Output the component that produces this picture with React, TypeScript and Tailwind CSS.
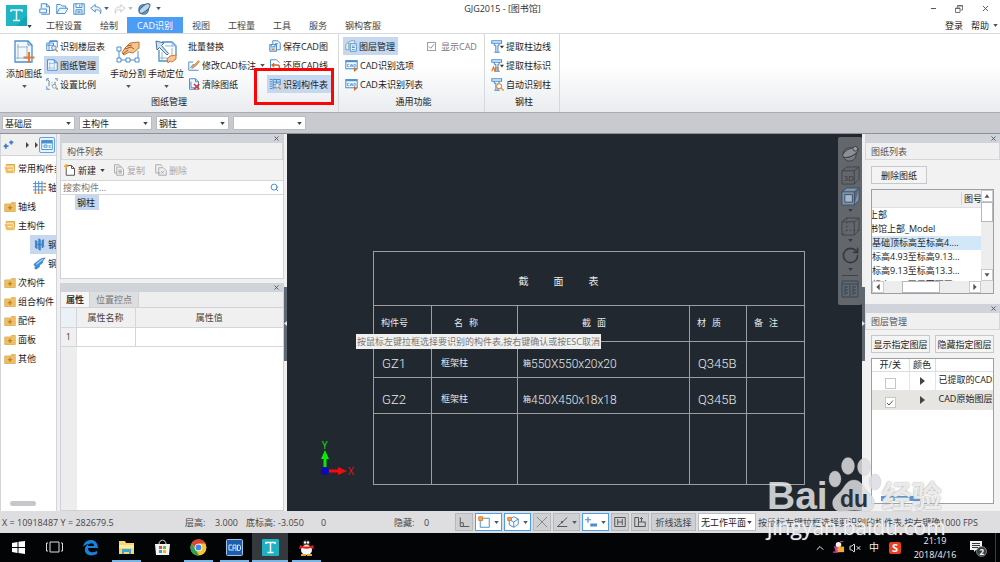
import type { ReactNode } from "react";
import { Search, X, Minus, ChevronUp, VolumeX, RotateCw } from "lucide-react";

type IconProps = { className?: string };

// Base wrapper for all the small 16x16 line icons
function Icon({ className = "size-3", children }: { className?: string; children: ReactNode }) {
  return (
    <svg viewBox="0 0 16 16" fill="none" stroke="#4a8fd0" strokeWidth="1.3" className={`shrink-0 ${className}`}>
      {children}
    </svg>
  );
}

function Caret({ className = "text-gray-600" }: IconProps) {
  return (
    <svg viewBox="0 0 6 4" className={`w-[5px] h-[3px] shrink-0 ${className}`}>
      <path d="M0 0h6L3 4z" fill="currentColor" />
    </svg>
  );
}

/* ---------- ribbon icons ---------- */
const FloorTableIcon = () => (
  <Icon>
    <path d="M5 1h10v9M5 1v3M1 4h9v10H1zM1 7h9M4 4v10M5 2h10" />
    <circle cx="10.5" cy="10.5" r="3" fill="#dcebf8" />
    <path d="M12.5 12.5l3 3" stroke="#e08030" strokeWidth="2" />
  </Icon>
);
const SheetIcon = () => (
  <Icon>
    <path d="M2 1h9l4 4v10H2zM11 1v4h4" fill="#eef6fd" />
    <path d="M5 4v9M2 12h10M4 6h7M11 6v7" stroke="#8ab6dd" strokeWidth="1" />
  </Icon>
);
const ScaleIcon = () => (
  <Icon>
    <path d="M1 4V1h3M12 1h3v3M1 11v4h4M2 2l3 3" />
    <path d="M4 5v6M12 5v5M8 6v1M8 9v1" stroke="#777" />
    <circle cx="11" cy="11" r="2.5" fill="#fff" stroke="#6aa7dc" />
    <path d="M13 13l3 2.5" stroke="#e08030" strokeWidth="2" />
  </Icon>
);
const EditDimIcon = () => (
  <Icon>
    <path d="M1 4v11h13M1 4h6M3 12l4-5 2 3 4-4" />
    <path d="M6 10l8-8 1.5 1.5-8 8-2.5 1z" fill="#f0a860" stroke="#c96a20" strokeWidth=".8" />
  </Icon>
);
const ClearIcon = () => (
  <Icon>
    <path d="M2 1h8l4 4v10H2zM10 1v4h4M4 5v8h5" fill="#eef6fd" />
    <path d="M8 8l7 7M15 8l-7 7" stroke="#dd2c2c" strokeWidth="2" />
  </Icon>
);
const SaveCadIcon = () => (
  <Icon>
    <path d="M5 5V1h7l3 3v9h-4" fill="#eef6fd" />
    <path d="M1 6h9v9H1zM3 6v3h5V6" fill="#cde3f7" />
    <path d="M8 5h4" />
    <path d="M3.5 12.5h4" stroke="#e08030" strokeWidth="2" />
  </Icon>
);
const RestoreIcon = () => (
  <Icon>
    <path d="M2 15V1h8l4 4" fill="none" />
    <path d="M6 8h5a3 3 0 010 6H8" stroke="#d8642c" strokeWidth="2" />
    <path d="M7 4.5L2.5 8 7 11.5z" fill="#d8642c" stroke="none" />
  </Icon>
);
const PartTableIcon = () => (
  <Icon>
    <path d="M1 2h3M1 5h3M1 8h3M1 11h3M1 14h3M5.5 1v14M5 2h10v7H5M5 5.5h10M10 2v12M5 13h5" />
    <circle cx="11" cy="10" r="2.5" fill="#fff3e2" stroke="#9ab" />
    <path d="M12.5 12l3 3" stroke="#e08a30" strokeWidth="2" />
  </Icon>
);
const LayerMgrIcon = () => (
  <Icon>
    <path d="M5 3l3-2h5v4M1 6l4-3v10H1z" stroke="#8aa" fill="#e6eef5" />
    <path d="M7 5h8v10H7zM9 8h4M9 10h4M9 12.5h4" fill="#fff" />
  </Icon>
);
const CadIcon = () => (
  <Icon className="size-[13px]">
    <rect x="1" y="2" width="14" height="10" fill="#fff" />
    <path d="M1 3h14" strokeWidth="2" />
    <path d="M3 6.5h2.5M3 6.5v3M3 9.5h2.5M7 10V7h2v3M7 8.5h2M11 6.5v3.5h1.5l.8-1v-1.5l-.8-1z" strokeWidth="1" />
    <path d="M11 10v6l4-3z" fill="#e0662a" stroke="none" />
  </Icon>
);
function ColumnIcon({ mark }: { mark: "edge" | "label" | "auto" }) {
  return (
    <Icon className="size-[13px]">
      <path d="M1 1h12v3H1zM4 4v2l2 1v8M10 4v2L8.5 7v8M4 15h7" fill="#e4f1fc" />
      {mark !== "auto" && <path d="M11 7h5l-2.5 3.5z" fill="#333" stroke="none" />}
      {mark === "label" && <path d="M1 15l2-5 2 5M5.5 15v-4h3v4" stroke="#e07a30" strokeWidth="1.5" />}
      {mark === "auto" && (
        <>
          <circle cx="10" cy="10" r="3" fill="#fff" stroke="#e08a40" />
          <path d="M12 12l3.5 3.5" stroke="#e08a40" strokeWidth="1.6" />
        </>
      )}
    </Icon>
  );
}

const AddSheetIcon = () => (
  <svg viewBox="0 0 22 24" fill="none" stroke="#4a8fd0" className="w-[22px] h-6">
    <path d="M2 1h13l4 4v17H2z" fill="#f2f8fd" strokeWidth="1.3" />
    <path d="M15 1v4h4" />
    <path d="M5 4v15M3 18h12M4 7h11M14 6v13" stroke="#9db4c8" />
    <path d="M16 12v11M10.5 17.5h11" stroke="#e07a35" strokeWidth="2" />
  </svg>
);
const SplitIcon = () => (
  <svg viewBox="0 0 24 24" fill="none" className="size-6">
    <path d="M3 9v11h19v-9" stroke="#4a8fd0" />
    <path d="M1 7h4v4H1zM1 18h4v4H1zM10 18h4v4h-4zM19 18h4v4h-4z" fill="#fff" stroke="#4a8fd0" />
    <path d="M6 13l3-5 5-5 9-1v6l-6 5-4-1-5 3z" fill="#f3c594" stroke="#c9722c" />
    <path d="M9 9l6-2 3 2M11 6l5-1M7 14l5-4" stroke="#a9581b" />
  </svg>
);
const LocateIcon = () => (
  <svg viewBox="0 0 24 24" fill="none" className="size-6">
    <path d="M8 2h10l4 4v10M5 10v11h9" stroke="#4a8fd0" strokeWidth="1.3" />
    <path d="M18 2v4h4M8 12v9M18 8v8M6 18h8M11 6h8" stroke="#8ab6dd" />
    <path d="M2 1l8 2-2.5 2.5 7 8-1.5 1.5-7.5-7.5L3 10z" fill="#cfe2f4" stroke="#4d6f96" />
    <path d="M13 19l3-3 6-1v4l-4 3-2-1-2 2z" fill="#f7c48e" stroke="#d8763c" />
  </svg>
);

/* ---------- building blocks ---------- */
function RibbonButton({ icon, label, active, caret }: { icon?: ReactNode; label: string; active?: boolean; caret?: boolean }) {
  return (
    <button className={`h-[18px] flex items-center gap-[2px] pl-[2px] pr-[3px] whitespace-nowrap ${active ? "bg-[#c5d8f0]" : ""}`}>
      {icon}
      <span>{label}</span>
      {caret && <Caret className="ml-[2px] text-gray-600" />}
    </button>
  );
}

function BigButton({ icon, label }: { icon: ReactNode; label: string }) {
  return (
    <button className="w-[38px] h-14 pt-[3px] flex flex-col items-center whitespace-nowrap">
      {icon}
      <span className="mt-[3px]">{label}</span>
      <Caret className="mt-[5px] text-gray-600" />
    </button>
  );
}

function RibbonGroup({ title, className, children }: { title: string; className: string; children: ReactNode }) {
  return (
    <section className={`flex flex-col shrink-0 border-r border-[#d5d8dc] ${className}`}>
      <div className="flex pt-[3px] h-[61px]">{children}</div>
      <div className="text-center leading-[14px]">{title}</div>
    </section>
  );
}

function Combo({ label, value, className = "" }: { label: string; value: string; className?: string }) {
  return (
    <div className={`relative flex items-center ${className}`}>
      <select
        aria-label={label}
        defaultValue={value}
        className="appearance-none w-full h-full bg-white border border-[#b9bcc2] pl-[2px] pr-2 text-[9px] text-[#222]"
      >
        <option>{value}</option>
      </select>
      <Caret className="absolute right-1 text-gray-700 pointer-events-none" />
    </div>
  );
}

function PanelHead({ title }: { title?: string }) {
  return (
    <>
      <div className="h-[9px] shrink-0 bg-[#d0d3da] flex items-center justify-end pr-[3px]">
        <button aria-label="关闭" className="text-gray-600">
          <X size={7} strokeWidth={3} />
        </button>
      </div>
      {title && (
        <div className="h-[17px] shrink-0 flex items-center px-[5px] bg-[#f0f0f1] border border-t-0 border-[#d4d6da] text-[#555]">
          {title}
        </div>
      )}
    </>
  );
}

/* ---------- header ---------- */
const tabs = ["工程设置", "绘制", "CAD识别", "视图", "工程量", "工具", "服务", "钢构客服"];

function Logo({ className = "size-[21px]" }: IconProps) {
  return (
    <svg viewBox="0 0 21 21" className={className}>
      <rect width="21" height="21" fill="#12a5b8" />
      <path d="M0 0h21v10L10 21H0z" fill="#20b4c4" />
      <path d="M5 7V5h11v2M10.5 5v10M7 15.5h7" stroke="#e4f8fa" strokeWidth="1.5" fill="none" />
    </svg>
  );
}

function Header() {
  return (
    <header className="flex shrink-0 h-[33px] bg-white">
      <div className="w-[37px] pl-[6px] pt-[5px] flex shrink-0 items-start">
        <Logo />
        <Caret className="mt-[20px] text-gray-700" />
      </div>
      <div className="flex-1 flex flex-col min-w-0">
        <div className="h-[17px] flex items-center">
          <div className="w-[126px] pl-[2px] flex items-center gap-[5px] shrink-0">
            <button aria-label="新建">
              <Icon><path d="M3 7V1h7l4 4v10H3M10 1v4h4M1 8h9v5H1z" fill="#eef6fd" /></Icon>
            </button>
            <button aria-label="打开">
              <Icon><path d="M1 14V2h5l2 2h5v3M1 14l4-7h11l-4 7z" fill="#eef6fd" /></Icon>
            </button>
            <button aria-label="保存">
              <Icon><path d="M1 1h14v14H1zM4 1v5h8V1M4 15v-6h8v6M9 2v3M6 11h4M6 13h4" fill="#eef6fd" /></Icon>
            </button>
            <button aria-label="撤销" className="flex items-center gap-[2px]">
              <Icon><path d="M7 2L1 7l6 5V9c5 0 7 1 7 5 2-6-1-9-7-9z" fill="#eef6fd" /></Icon>
              <Caret />
            </button>
            <button aria-label="重做" className="flex items-center gap-[2px] opacity-40">
              <Icon><path d="M9 2l6 5-6 5V9c-5 0-7 1-7 5-2-6 1-9 7-9z" stroke="#888" fill="#eee" /></Icon>
              <Caret />
            </button>
            <button aria-label="视图" className="flex items-center gap-[5px]">
              <Icon className="size-[13px]">
                <circle cx="7" cy="9" r="6" fill="#6da4d8" stroke="#42719e" />
                <ellipse cx="8" cy="8" rx="8" ry="3.5" transform="rotate(-40 8 8)" fill="#bcd6ec" stroke="#3e6288" />
              </Icon>
              <Caret />
            </button>
          </div>
          <h1 className="flex-1 text-center pr-[88px] text-[9px] text-[#333]">GJG2015 - [图书馆]</h1>
          <div className="flex items-center gap-[18px] pr-[10px] text-gray-600">
            <button aria-label="最小化"><Minus size={7} strokeWidth={4} /></button>
            <button aria-label="还原">
              <Icon className="size-2"><path d="M1 6h9v9H1zM5 5V1h10v9h-4M1 7h9M5 2h10" stroke="#555" strokeWidth="1.6" /></Icon>
            </button>
            <button aria-label="关闭"><X size={9} strokeWidth={2.5} /></button>
          </div>
        </div>
        <nav className="flex-1 flex items-center text-[#444]">
          {tabs.map((t) => (
            <button
              key={t}
              className={`h-full whitespace-nowrap ${t === "CAD识别" ? "px-[10px] bg-[#4c9df5] text-white" : "px-[9px]"}`}
            >
              {t}
            </button>
          ))}
          <div className="ml-auto flex items-center gap-2 pr-[2px] text-[#222]">
            <button>登录</button>
            <button className="flex items-center gap-[4px]">帮助 <Caret /></button>
          </div>
        </nav>
      </div>
    </header>
  );
}

function Ribbon() {
  return (
    <div className="h-20 shrink-0 flex border-t border-[#d8dade] border-b border-b-[#a9adb3] bg-linear-to-b from-white from-40% to-[#eaecef]">
      <RibbonGroup title="图纸管理" className="w-[339px] relative">
        <div className="ml-[5px]"><BigButton icon={<AddSheetIcon />} label="添加图纸" /></div>
        <div className="ml-[1px] w-[65px] flex flex-col items-start gap-[1px]">
          <RibbonButton icon={<FloorTableIcon />} label="识别楼层表" />
          <RibbonButton icon={<SheetIcon />} label="图纸管理" active />
          <RibbonButton icon={<ScaleIcon />} label="设置比例" />
        </div>
        <BigButton icon={<SplitIcon />} label="手动分割" />
        <BigButton icon={<LocateIcon />} label="手动定位" />
        <div className="w-[81px] pl-[1px] flex flex-col items-start gap-[1px]">
          <RibbonButton label="批量替换" />
          <RibbonButton icon={<EditDimIcon />} label="修改CAD标注" caret />
          <RibbonButton icon={<ClearIcon />} label="清除图纸" />
        </div>
        <div className="pl-[1px] flex flex-col items-start gap-[1px]">
          <RibbonButton icon={<SaveCadIcon />} label="保存CAD图" />
          <RibbonButton icon={<RestoreIcon />} label="还原CAD线" />
          <RibbonButton icon={<PartTableIcon />} label="识别构件表" active />
        </div>
        <div className="absolute left-[254px] top-[34px] w-[80px] h-[37px] border-[3px] border-[#fb0606] pointer-events-none" />
      </RibbonGroup>
      <RibbonGroup title="通用功能" className="w-[146px] pl-[4px]">
        <div className="w-[84px] flex flex-col items-start gap-[1px]">
          <RibbonButton icon={<LayerMgrIcon />} label="图层管理" active />
          <RibbonButton icon={<CadIcon />} label="CAD识别选项" />
          <RibbonButton icon={<CadIcon />} label="CAD未识别列表" />
        </div>
        <label className="h-[18px] flex items-center gap-[5px] text-[#777] whitespace-nowrap">
          <input type="checkbox" defaultChecked className="peer sr-only" />
          <span className="size-[9px] border border-gray-400 bg-white flex items-center justify-center">
            <Icon className="size-[7px]"><path d="M2 8l4 4 8-9" stroke="#777" strokeWidth="2" /></Icon>
          </span>
          显示CAD
        </label>
      </RibbonGroup>
      <RibbonGroup title="钢柱" className="w-[75px] pl-[4px]">
        <div className="flex flex-col items-start gap-[1px]">
          <RibbonButton icon={<ColumnIcon mark="edge" />} label="提取柱边线" />
          <RibbonButton icon={<ColumnIcon mark="label" />} label="提取柱标识" />
          <RibbonButton icon={<ColumnIcon mark="auto" />} label="自动识别柱" />
        </div>
      </RibbonGroup>
    </div>
  );
}

/* ---------- left side ---------- */
type TreeItem = { label: string; open?: boolean; child?: "grid" | "column" | "beam"; active?: boolean };

const tree: TreeItem[] = [
  { label: "常用构件类型", open: true },
  { label: "轴网", child: "grid" },
  { label: "轴线" },
  { label: "主构件", open: true },
  { label: "钢柱", child: "column", active: true },
  { label: "钢梁", child: "beam" },
  { label: "次构件" },
  { label: "组合构件" },
  { label: "配件" },
  { label: "面板" },
  { label: "其他" },
];

function TreeIcon({ item }: { item: TreeItem }) {
  if (item.child === "grid")
    return (
      <Icon className="size-[13px]">
        <path d="M3 0v13M7 0v13M11 0v13M0 3h13M0 7h13M0 11h13" strokeWidth="1.2" />
        <path d="M13 3h3M13 7h3M13 11h3M3 13v3M7 13v3M11 13v3" stroke="#e07a35" strokeWidth="2" />
      </Icon>
    );
  if (item.child === "column")
    return (
      <Icon className="size-[13px]">
        <path d="M3 3l2 1v9l-2-1zM7 1l2 1v13l-2-1zM11 3l2-1v9l-2 1zM5 8h6" fill="#3d8edb" stroke="#2a6fb5" strokeWidth=".8" />
      </Icon>
    );
  if (item.child === "beam")
    return (
      <Icon className="size-[13px]">
        <path d="M2 8l8-6 5-1-3 4v2l-4 3v2l-4 3-2-1 1-3-2-1z" fill="#3d8edb" stroke="#2a6fb5" strokeWidth=".6" />
        <path d="M4 9l8-6" stroke="#bfe0fa" />
      </Icon>
    );
  return (
    <Icon className="size-3">
      {item.open ? (
        <>
          <path d="M3 12V2h11v11" fill="#f0cb7c" stroke="#dba94a" />
          <path d="M0 5h12l2 9H3z" fill="#edbd60" stroke="#fff" strokeWidth=".8" />
          <path d="M5 9h6" stroke="#fff" />
        </>
      ) : (
        <>
          <path d="M1 14V4h8l1-2h5v12z" fill="#ecc069" stroke="#e2b45a" />
          <path d="M8 6v6M5 9h6" stroke="#b97a1c" strokeWidth="1.6" />
        </>
      )}
    </Icon>
  );
}

function Sidebar() {
  return (
    <aside className="w-[57px] shrink-0 flex flex-col bg-white border-x border-[#d2d4d8] overflow-hidden">
      <div className="h-[22px] shrink-0 flex items-center bg-[#f0f0f1] border-b border-[#d2d4d8] pl-[2px]">
        <Icon className="size-[11px]"><path d="M4 7v7M1 10.5h7M12 2v6M9 5h6" strokeWidth="2.6" stroke="#3a7fca" /></Icon>
        <svg viewBox="0 0 14 6" className="ml-[11px] w-[14px] h-[6px] shrink-0"><path d="M1 0l3 3-3 3zM9 0v6M10 0l3 3-3 3z" fill="#444" /></svg>
        <button aria-label="显示方式" className="size-4 shrink-0 border border-[#5ba2e6] rounded-[2px] bg-[#e8f3fd] flex items-center justify-center">
          <Icon className="size-3"><path d="M1 2h14v12H1z" fill="#fff" /><path d="M1 4h14" strokeWidth="4" /><path d="M4 8h4v3H4zM10 9h3M10 11h3" /></Icon>
        </button>
      </div>
      <ul className="pt-[3px] flex-1">
        {tree.map((item) => (
          <li key={item.label}>
            <button
              className={`flex items-center gap-[2px] h-[19px] whitespace-nowrap text-[#222] ${
                item.child ? "ml-[29px] pl-[3px]" : "pl-[3px]"
              } ${item.active ? "bg-[#c5d8f0]" : ""}`}
            >
              <TreeIcon item={item} />
              <span>{item.label}</span>
            </button>
          </li>
        ))}
      </ul>
      <div className="h-[5px] w-[26px] ml-[9px] mb-[5px] rounded-full bg-[#c6c7ca]" />
    </aside>
  );
}

function ComponentPanels() {
  return (
    <div className="w-[224px] shrink-0 ml-[3px] flex flex-col gap-[4px]">
      <section className="h-[145px] shrink-0 flex flex-col bg-white border border-t-0 border-[#d0d2d7]">
        <PanelHead title="构件列表" />
        <div className="h-[20px] shrink-0 flex items-center px-[3px] bg-[#f2f2f3] text-[#aaa]">
          <button className="flex items-center gap-[2px] text-[#222]">
            <Icon><path d="M3 2h7l4 4v9H3zM10 2v4h4" stroke="#555" fill="#fff" /><path d="M3 0v6M0 3h6" stroke="#f0a92c" strokeWidth="2" /></Icon>
            新建 <Caret className="ml-[2px] text-gray-700" />
          </button>
          <button disabled className="ml-2 flex items-center gap-[2px]">
            <Icon><path d="M5 12H2V1h6l3 3M5 4h6l3 3v8H5zM7 8h5M7 10h5M7 12h5" stroke="#aaa" /></Icon>
            复制
          </button>
          <button disabled className="ml-[10px] flex items-center gap-[2px]">
            <Icon><path d="M7 12H1V1h7l2 2M5 5h6l4 4v6H5zM8 9l4 4M12 9l-4 4" stroke="#aaa" /></Icon>
            删除
          </button>
        </div>
        <div className="h-[15px] shrink-0 flex items-center border-y border-[#d4d6da] pr-1">
          <input aria-label="搜索构件" placeholder="搜索构件..." className="flex-1 min-w-0 pl-[2px] text-[9px] outline-none placeholder:text-[#777]" />
          <Search size={9} strokeWidth={2.5} className="text-[#3b87cf]" />
        </div>
        <div className="pl-[14px]">
          <button className="px-[2px] h-[15px] leading-[15px] bg-[#c5d8f0] pr-1 text-[#222]">钢柱</button>
        </div>
      </section>

      <section className="flex-1 flex flex-col bg-white border border-t-0 border-[#d0d2d7]">
        <PanelHead />
        <div className="h-4 shrink-0 flex bg-[#eeeeef] border-b border-[#d0d2d7]">
          <button className="px-[5px] font-bold bg-[#f6f6f7] text-[#333]">属性</button>
          <button className="px-[6px] bg-[#dddee0] border-x border-[#cfd1d5] text-[#777]">位置控点</button>
        </div>
        <div className="flex-1 flex flex-col bg-linear-to-r from-[#ededee] from-[16px] to-white to-[16px]">
          <table className="w-full table-fixed border-collapse text-[#444]">
            <thead>
              <tr className="h-[19px] bg-[#f0f0f1]">
                <th className="w-[15px] bg-[#eaf1f7] border-r border-b border-[#d4d6da]" />
                <th className="w-[59px] font-normal border-r border-b border-[#d4d6da]">属性名称</th>
                <th className="font-normal border-b border-[#d4d6da]">属性值</th>
              </tr>
            </thead>
            <tbody>
              <tr className="h-[19px] bg-white">
                <td className="text-center bg-[#f0f0f1] border-r border-b border-[#d4d6da]">1</td>
                <td className="border-r border-b border-[#d4d6da]" />
                <td className="border-b border-[#d4d6da]" />
              </tr>
            </tbody>
          </table>
        </div>
      </section>
    </div>
  );
}

/* ---------- CAD canvas ---------- */
const sectionRows = [
  { id: "GZ1", name: "框架柱", size: "550X550x20x20", material: "Q345B" },
  { id: "GZ2", name: "框架柱", size: "450X450x18x18", material: "Q345B" },
];

function Spaced({ text, className = "gap-[6px]" }: { text: string; className?: string }) {
  return (
    <span className={`flex ${className}`}>
      {text.split("").map((c) => (
        <span key={c}>{c}</span>
      ))}
    </span>
  );
}

const cell = "border border-[#9a9ea3] p-0";

function SectionTable() {
  return (
    <table className="absolute left-[86px] top-[117px] w-[431px] table-fixed border-collapse text-[#e6e8ea] font-['Roboto','Noto_Sans_CJK_SC',sans-serif]">
      <colgroup>
        <col className="w-[58px]" />
        <col className="w-[86px]" />
        <col className="w-[172px]" />
        <col className="w-[57px]" />
        <col className="w-[58px]" />
      </colgroup>
      <thead>
        <tr className="h-[54px]">
          <th colSpan={5} className={`${cell} font-normal text-[10px] pt-[6px]`}>
            <Spaced text="截面表" className="gap-[25px] justify-center pr-[61px]" />
          </th>
        </tr>
        <tr className="h-9">
          <th className={`${cell} font-normal pl-[7px] text-left`}>构件号</th>
          <th className={`${cell} font-normal`}><Spaced text="名称" className="gap-[6px] pl-[22px]" /></th>
          <th className={`${cell} font-normal`}><Spaced text="截面" className="gap-[6px] pl-[64px]" /></th>
          <th className={`${cell} font-normal`}><Spaced text="材质" className="gap-[6px] pl-[7px]" /></th>
          <th className={`${cell} font-normal`}><Spaced text="备注" className="gap-[6px] pl-[7px]" /></th>
        </tr>
      </thead>
      <tbody>
        {sectionRows.map((r) => (
          <tr key={r.id} className="h-9">
            <td className={`${cell} pl-[8px] pt-[8px] text-[13px] font-light leading-[18px]`}>{r.id}</td>
            <td className={`${cell} pl-[9px] pt-[8px]`}>{r.name}</td>
            <td className={`${cell} pl-[5px] pt-[8px]`}>
              <span className="flex items-center leading-[18px]">
                <span className="text-[8px]">箱</span>
                <span className="text-[12px] font-light">{r.size}</span>
              </span>
            </td>
            <td className={`${cell} pl-[8px] pt-[8px] text-[13px] font-light leading-[18px]`}>{r.material}</td>
            <td className={cell} />
          </tr>
        ))}
        <tr className="h-[71px]">
          <td className={cell} />
          <td className={cell} />
          <td className={cell} />
          <td className={cell} />
          <td className={cell} />
        </tr>
      </tbody>
    </table>
  );
}

function Cube({ label, filled }: { label?: string; filled?: boolean }) {
  return (
    <svg viewBox="0 0 20 20" className="size-[19px]" fill="none" stroke={filled ? "#36506e" : "#3e4349"}>
      <path d="M1 5h13v14H1zM1 5l5-4h13l-5 4M19 1v13l-5 5" fill={filled ? "#8093a8" : "none"} />
      {filled && <path d="M4 8h8v8H4z" fill="#a9b6c4" />}
      {!filled && !label && <path d="M6 1v13h13M6 14l-5 5" strokeDasharray="2 2" />}
      {label && <text x="3" y="16" fontSize="8" fill="#33383d" stroke="none">{label}</text>}
    </svg>
  );
}

function ViewTools() {
  return (
    <div className="absolute right-0 top-[3px] w-6 h-[168px] rounded-[2px] bg-[#63676b] text-[#34393f] flex flex-col items-center pt-[6px]">
      <button aria-label="动态观察" className="h-[21px]">
        <svg viewBox="0 0 20 20" className="size-[19px]" fill="none" stroke="#3b4046">
          <circle cx="9" cy="11" r="7" fill="#7a7e83" />
          <ellipse cx="10" cy="9" rx="9" ry="4" transform="rotate(-25 10 9)" fill="#8c9095" />
          <circle cx="15" cy="5" r="2.5" fill="#999da1" />
        </svg>
      </button>
      <button aria-label="三维" className="h-[22px]"><Cube label="3D" /></button>
      <button aria-label="着色" className="h-[20px]"><Cube filled /></button>
      <Caret className="mt-[3px]" />
      <button aria-label="线框" className="mt-[4px] h-[20px]"><Cube /></button>
      <Caret className="mt-[3px]" />
      <button aria-label="旋转" className="mt-[4px]"><RotateCw size={19} strokeWidth={2} /></button>
      <Caret className="mt-[3px]" />
      <div className="w-4 h-px my-[4px] bg-[#3e4349]" />
      <button aria-label="表格">
        <svg viewBox="0 0 18 18" className="size-[18px]" fill="none" stroke="#33485c">
          <path d="M1 1h16v16H1zM1 4h16M9 5v12M4 6v9M12 6v9M4 7h3M4 10h3M4 13h3M12 7h3M12 10h3M12 13h3" />
        </svg>
      </button>
    </div>
  );
}

function Canvas() {
  return (
    <main className="relative flex-1 min-w-0 bg-[#212830] overflow-hidden">
      <SectionTable />
      <svg viewBox="0 0 36 40" className="absolute left-[34px] top-[306px] w-9 h-10">
        <text x="1" y="9" fontSize="10" fill="#13e613">Y</text>
        <path d="M4 31V14" stroke="#0be60b" strokeWidth="3" />
        <path d="M0 19l4-9 4 9z" fill="#0be60b" />
        <path d="M6 31h13" stroke="#f20c0c" strokeWidth="3" />
        <path d="M17 27v8l9-4z" fill="#f20c0c" />
        <circle cx="4" cy="31" r="4" fill="#0a0ab8" />
        <text x="27" y="35" fontSize="10" fill="#f21212">X</text>
      </svg>
      <div className="absolute left-[69px] top-[200px] h-[15px] leading-[15px] px-[1px] bg-[#f0f0f0] text-[#777] whitespace-nowrap">
        按鼠标左键拉框选择要识别的构件表,按右键确认或按ESC取消
      </div>
      <ViewTools />
    </main>
  );
}

/* ---------- right side ---------- */
const drawings = ["图书馆上部", "图书馆上部_Model", "基础顶标高至标高4....", "标高4.93至标高9.13...", "标高9.13至标高13.3...", "标高13.3至屋面顶图"];

function ScrollArrow({ d }: { d: string }) {
  return (
    <svg viewBox="0 0 12 12" className="size-[12px] shrink-0 bg-white border border-[#c8cace]">
      <path d={d} fill="#555" />
    </svg>
  );
}

function DrawingPanel() {
  return (
    <section className="h-[167px] shrink-0 flex flex-col bg-[#f2f2f3]">
      <PanelHead title="图纸列表" />
      <div className="px-[6px] pt-[6px] flex flex-col items-start">
        <button className="h-[18px] px-[9px] border border-[#c6c8cc] bg-[#f4f4f5] text-[#222]">删除图纸</button>
        <div className="mt-[5px] w-full h-[105px] border border-[#9ba0a8] bg-white flex flex-col">
          <div className="flex flex-1 min-h-0">
            <div className="flex-1 min-w-0 overflow-hidden">
              <div className="h-[18px] flex items-center justify-end bg-[#f0f0f1] border-b border-[#e0e0e2] overflow-hidden">
                <span className="border-l border-[#d0d2d6] pl-[2px] -mr-[1px] text-[#222] whitespace-nowrap">图号</span>
              </div>
              <ul className="text-[#222]">
                {drawings.map((d, i) => (
                  <li
                    key={d}
                    className={`h-[14px] leading-[14px] whitespace-nowrap overflow-hidden ${i === 2 ? "bg-[#d3e7fa]" : ""} ${
                      i === 0 ? "-indent-[30px]" : i === 1 ? "-indent-[12px]" : ""
                    }`}
                  >
                    {d}
                  </li>
                ))}
              </ul>
            </div>
            <div className="w-[12px] shrink-0 flex flex-col bg-[#ededee]">
              <ScrollArrow d="M3 8h6L6 4z" />
              <div className="h-[20px] bg-white border border-[#b4b7bc]" />
              <div className="mt-auto h-[12px]"><ScrollArrow d="M3 4h6L6 8z" /></div>
            </div>
          </div>
          <div className="h-[12px] shrink-0 flex bg-[#ededee]">
            <ScrollArrow d="M8 2v8L4 6z" />
            <div className="flex-1 flex justify-center pr-3"><div className="w-[38px] bg-white border border-[#b4b7bc]" /></div>
            <ScrollArrow d="M4 2v8l4-4z" />
            <div className="w-[12px]" />
          </div>
        </div>
      </div>
    </section>
  );
}

const layers = [
  { name: "已提取的CAD图层", on: false },
  { name: "CAD原始图层", on: true },
];

function LayerPanel() {
  return (
    <section className="flex-1 flex flex-col bg-[#f2f2f3]">
      <PanelHead title="图层管理" />
      <div className="flex-1 flex flex-col px-[6px] pt-[5px] pb-[7px]">
        <div className="flex justify-between text-[#222]">
          <button className="h-[18px] w-[59px] whitespace-nowrap border border-[#c6c8cc] bg-[#f4f4f5]">显示指定图层</button>
          <button className="h-[18px] w-[59px] whitespace-nowrap border border-[#c6c8cc] bg-[#f4f4f5]">隐藏指定图层</button>
        </div>
        <div className="relative mt-[5px] flex-1 border border-[#9ba0a8] bg-white overflow-hidden">
          <table className="w-full table-fixed border-collapse text-[#222]">
            <thead>
              <tr className="h-[12px] leading-[12px] border-b border-[#dcdde0]">
                <th className="w-[37px] p-0 font-normal border-r border-[#dcdde0]">开/关</th>
                <th className="w-[26px] p-0 font-normal border-r border-[#dcdde0]">颜色</th>
                <th className="p-0" />
              </tr>
            </thead>
            <tbody>
              {layers.map((l) => (
                <tr key={l.name} className={`h-[19px] ${l.on ? "bg-[#e6e5e1]" : "border-b border-[#e6e6e8]"}`}>
                  <td className="p-0 pt-[5px] border-r border-[#e4e4e6]">
                    <label className="flex justify-center" aria-label={l.name}>
                      <input type="checkbox" defaultChecked={l.on} className="sr-only" />
                      <span className="size-[11px] border border-[#c4c6ca] bg-white flex items-center justify-center">
                        {l.on && <Icon className="size-2"><path d="M2 8l4 4 8-9" stroke="#555" strokeWidth="2" /></Icon>}
                      </span>
                    </label>
                  </td>
                  <td className="p-0 border-r border-[#e4e4e6]">
                    <svg viewBox="0 0 5 8" className="mx-auto w-[5px] h-2"><path d="M0 0l5 4-5 4z" fill="#444" /></svg>
                  </td>
                  <td className="p-0 pb-[3px] pl-[3px] whitespace-nowrap overflow-hidden">{l.name}</td>
                </tr>
              ))}
            </tbody>
          </table>
          <div className="absolute left-[9px] bottom-[2px] w-[39px] h-[5px] bg-[#5b96d8]" />
        </div>
      </div>
    </section>
  );
}

/* ---------- status bar ---------- */
function ToolButton({ label, on, caret, children }: { label: string; on?: boolean; caret?: boolean; children: ReactNode }) {
  return (
    <button
      aria-label={label}
      className={`h-[18px] flex items-center justify-center gap-[4px] border ${caret ? "w-[27px]" : "w-[18px]"} ${
        on ? "bg-white border-[#4b9df0]" : "bg-[#cfd0d3] border-[#b6b8bc]"
      }`}
    >
      {children}
      {caret && <Caret />}
    </button>
  );
}

function StatusBar() {
  return (
    <div className="h-[22px] shrink-0 flex items-center bg-[#dedee1] text-[#444] whitespace-nowrap">
      <span className="w-[185px] pl-[2px]">X = 10918487 Y = 282679.5</span>
      <span className="w-[30px]">层高:</span>
      <span className="w-[31px]">3.000</span>
      <span className="w-[32px]">底标高:</span>
      <span className="w-[43px]">-3.050</span>
      <span className="w-[73px]">0</span>
      <span className="w-[30px]">隐藏:</span>
      <span className="w-[31px]">0</span>
      <div className="flex gap-[2px] shrink-0">
        <ToolButton label="正交"><Icon><path d="M3 2v12h12M3 9h4v5" stroke="#555" /></Icon></ToolButton>
        <ToolButton label="对象捕捉" on caret>
          <Icon><path d="M3 3h12v12H3z" /><path d="M1 1h5v5H1z" fill="#f2a55c" stroke="#e08030" /></Icon>
        </ToolButton>
        <ToolButton label="三维捕捉" on caret>
          <Icon><path d="M9 1l6 3v7l-6 4-6-3V5zM3 5l6 3 6-4M9 8v7" /><path d="M1 2h5v4H1z" fill="#f2a55c" stroke="#e08030" /></Icon>
        </ToolButton>
        <ToolButton label="交点"><Icon><path d="M1 1l14 14M15 1L1 15" stroke="#888" /></Icon></ToolButton>
        <ToolButton label="极轴" caret><Icon><path d="M15 2L2 14h13" stroke="#555" /><circle cx="8" cy="8" r="1.5" fill="#555" stroke="none" /></Icon></ToolButton>
        <ToolButton label="动态输入" on caret>
          <Icon><path d="M4 1v8M0 5h8" strokeWidth="1.6" /><path d="M7 12h9" strokeWidth="4" /></Icon>
        </ToolButton>
        <ToolButton label="标注"><Icon><path d="M1 2h14v12H1zM5 4v8M11 4v8M5 8h6" stroke="#555" /></Icon></ToolButton>
        <ToolButton label="对齐"><Icon><path d="M1 2h5v12H1zM6 8h9v6H6M10 8V2M8 4l2-2 2 2" stroke="#555" /></Icon></ToolButton>
        <button className="h-[18px] w-[45px] border border-[#b6b8bc] bg-[#cfd0d3] text-[#444]">折线选择</button>
      </div>
      <Combo label="工作平面" value="无工作平面" className="ml-[2px] w-[58px] h-[18px] shrink-0" />
      <span className="ml-[2px] w-[182px] overflow-hidden">按鼠标左键拉框选择要识别的构件表,按右键确认</span>
      <span>1000 FPS</span>
    </div>
  );
}

/* ---------- windows taskbar ---------- */
const apps: { name: string; running?: boolean; active?: boolean; icon: ReactNode }[] = [
  { name: "开始", icon: <path d="M2 4l5.5-1v5H2zM8.500 2.800L15 2v6H8.500zM2 9h5.500v5L2 13zM8.500 9H15v6l-6.500-1z" fill="#fff" /> },
  { name: "任务视图", icon: <path d="M4 3h9v10H4zM2 4H.5v8H2M15 4h1.500v8H15" stroke="#ddd" fill="none" /> },
  {
    name: "Edge",
    icon: <path d="M1 8c1-9 15-10 15 1H6c0 5 5 5 9 3v3c-6 3-13 1-12-5 0-2 1-4 4-5-4 0-6 3-6 3zM6 7h6c0-4-6-3-6 0z" fill="#1583dd" />,
  },
  {
    name: "文件资源管理器",
    running: true,
    icon: (
      <>
        <path d="M1 2h6l1 2h8v11H1z" fill="#f8d56f" />
        <path d="M1 6h15v3H1z" fill="#fdeaa5" />
        <path d="M4 15v-5h9v5h-2v-2H6v2z" fill="#3aa6dc" />
      </>
    ),
  },
  {
    name: "应用商店",
    icon: (
      <>
        <path d="M5 5c0-5 7-5 7 0" stroke="#ddd" fill="none" />
        <path d="M1 5h15l-1 11H2z" fill="#f4f4f4" />
        <path d="M5 7h3v3H5z" fill="#e8502c" />
        <path d="M9 7h3v3H9z" fill="#7cb82c" />
        <path d="M5 11h3v3H5z" fill="#28a0e0" />
        <path d="M9 11h3v3H9z" fill="#f6b420" />
      </>
    ),
  },
  {
    name: "Chrome",
    running: true,
    icon: (
      <>
        <circle cx="8.5" cy="8.5" r="8" fill="#f6c62e" />
        <path d="M1.5 4.5a8 8 0 0114 0H8.500L6 10z" fill="#dd4334" />
        <path d="M1.5 4.5L6 11l3 5.5a8 8 0 01-7.5-12z" fill="#2fa14f" />
        <circle cx="8.5" cy="8.5" r="3.8" fill="#fff" />
        <circle cx="8.5" cy="8.5" r="2.9" fill="#4384f0" />
      </>
    ),
  },
  {
    name: "CAD",
    running: true,
    icon: (
      <>
        <rect x=".5" y=".5" width="16" height="16" rx="1" fill="#1d5fae" stroke="#9cc3ea" />
        <path d="M6 6H3v5h3M7 12V6h3v6M7 9h3M11.5 6v5.5h2l1-1.5V7.500l-1-1.500z" stroke="#cfe6fa" fill="none" />
      </>
    ),
  },
  {
    name: "GJG2015",
    running: true,
    active: true,
    icon: (
      <>
        <rect width="17" height="17" rx="1" fill="#1fb0c2" />
        <path d="M4 5V3.500h9V5M8.500 4v9M5.500 13.500h6" stroke="#fff" strokeWidth="1.5" fill="none" />
      </>
    ),
  },
  {
    name: "QQ",
    running: true,
    icon: (
      <>
        <ellipse cx="8.5" cy="4.5" rx="4" ry="4" fill="#222" />
        <ellipse cx="8.5" cy="11" rx="5.5" ry="5" fill="#f6f6f6" />
        <circle cx="7" cy="3.5" r="1.2" fill="#fff" />
        <circle cx="10" cy="3.5" r="1.2" fill="#fff" />
        <path d="M2 6c4 2 9 2 13 0l1 4-3-1c-3 1-6 1-9 0l-3 1z" fill="#e02020" />
        <path d="M6 5.500h5l-2.500 1zM3 15h5v2H3zM9 15h5v2H9z" fill="#f0a020" />
      </>
    ),
  },
];

function Taskbar() {
  return (
    <footer className="h-[29px] shrink-0 flex items-stretch bg-[#020406] text-[#f0f0f0]">
      {apps.map((a) => (
        <button
          key={a.name}
          aria-label={a.name}
          className={`w-9 shrink-0 flex flex-col items-center justify-between pt-[6px] ${a.active ? "bg-[#35383c]" : ""}`}
        >
          <svg viewBox="0 0 17 17" className="size-[17px]">{a.icon}</svg>
          <span className={`h-[2px] ${a.active ? "w-full" : "w-[29px]"} ${a.running ? "bg-[#76b5e6]" : ""}`} />
        </button>
      ))}
      <div className="ml-auto flex items-center">
        <button aria-label="显示隐藏的图标"><ChevronUp size={12} /></button>
        <svg viewBox="0 0 14 14" className="ml-[6px] size-[13px]">
          <circle cx="7" cy="4" r="3" fill="#f4f4f4" />
          <path d="M2 5l4 2h4l-2 5H4z" fill="#e33b9c" />
          <path d="M6 6h7v6H6z" fill="#f2a832" />
          <path d="M9 1l3-1M1 12h5" stroke="#e33b9c" strokeWidth="1.5" />
        </svg>
        <VolumeX size={12} className="ml-[4px]" />
        <span className="ml-[8px] text-[10px]">中</span>
        <div className="ml-[10px] size-3 rounded-[2px] bg-[#e8401c] text-white text-[11px] leading-3 text-center font-bold">S</div>
        <div className="ml-[10px] w-[48px] text-center text-[9px] leading-[14px]">
          <div>21:19</div>
          <div>2018/4/16</div>
        </div>
        <button aria-label="通知" className="ml-[10px] mr-[8px]">
          <svg viewBox="0 0 18 18" className="size-[18px]">
            <path d="M1 2h12v9H7l-2 2v-2H1z" fill="#f2f2f2" />
            <path d="M3 4.500h8M3 6.500h8M3 8.500h6" stroke="#333" />
            <circle cx="12.5" cy="12.5" r="5" fill="#3b3e42" stroke="#bbb" strokeWidth=".6" />
            <text x="10.5" y="15.5" fontSize="8" fontWeight="bold" fill="#fff">2</text>
          </svg>
        </button>
        <div className="w-px h-full mr-1 bg-[#3a3d42]" />
      </div>
    </footer>
  );
}

function Watermark() {
  return (
    <div className="absolute right-[54px] bottom-[21px] w-[179px] pointer-events-none text-white/75">
      <div className="flex items-end h-[56px]">
        <span className="text-[39px] leading-[34px] font-bold font-['Liberation_Sans',Arial,sans-serif]">Bai</span>
        <svg viewBox="0 0 54 56" className="w-[54px] h-14 shrink-0">
          <g fill="#dcdde0" fillOpacity=".85" stroke="#bbb" strokeOpacity=".5" strokeWidth=".6">
            <ellipse cx="7" cy="22" rx="6" ry="8" />
            <ellipse cx="20" cy="9" rx="6.5" ry="8.5" />
            <ellipse cx="36" cy="10" rx="6.5" ry="8.5" />
            <ellipse cx="47" cy="25" rx="6" ry="8" />
            <path d="M26 23c7 0 9 6 13 11 5 5 9 8 7 15-2 6-7 6-12 5-5-1-10-1-15 0C13 55 7 55 5 49c-2-7 3-10 8-15 4-5 6-11 13-11z" />
          </g>
          <text x="12" y="50" fontSize="23" fontWeight="bold" fill="#2b3138" fontFamily="Liberation Sans">du</text>
        </svg>
        <span className="text-[30px] leading-[34px] font-bold text-white/80 [text-shadow:0_0_2px_#888]">经验</span>
      </div>
      <div className="text-[21px] leading-[28px] text-white/80 [text-shadow:0_0_1px_#bbb]">jingyan.baidu.com</div>
    </div>
  );
}

// Slim collapse handle between a dock and the canvas
function DockHandle({ className, d }: { className: string; d: string }) {
  return (
    <div className="w-[3px] shrink-0 flex flex-col justify-center">
      <button aria-label="折叠" className={`bg-[#5f6872] flex items-center justify-center ${className}`}>
        <svg viewBox="0 0 3 5" className="w-[3px] h-[5px]"><path d={d} fill="#e4e6e8" /></svg>
      </button>
    </div>
  );
}

function App() {
  return (
    <div className="relative h-screen min-h-[540px] flex flex-col overflow-hidden bg-[#f0f0f1] text-[9px] leading-[13px] text-[#222] font-['Open_Sans','Noto_Sans_CJK_SC',sans-serif]">
      <Header />
      <Ribbon />
      <div className="h-[21px] shrink-0 flex gap-1 pl-[2px] py-[3px] bg-[#c8cad0] border-b border-[#8d9198]">
        <Combo label="楼层" value="基础层" className="w-[73px]" />
        <Combo label="构件分类" value="主构件" className="w-[73px]" />
        <Combo label="构件类型" value="钢柱" className="w-[73px]" />
        <Combo label="构件" value="" className="w-[73px]" />
      </div>
      <div className="flex-1 min-h-0 flex">
        <Sidebar />
        <ComponentPanels />
        <DockHandle className="h-[74px] mt-[2px]" d="M3 0v5L0 2.500z" />
        <Canvas />
        <DockHandle className="h-[74px] mt-[2px]" d="M0 0v5l3-2.500z" />
        <aside className="w-[135px] shrink-0 flex flex-col gap-[3px]">
          <DrawingPanel />
          <LayerPanel />
        </aside>
      </div>
      <StatusBar />
      <Taskbar />
      <Watermark />
    </div>
  );
}

export default App;
